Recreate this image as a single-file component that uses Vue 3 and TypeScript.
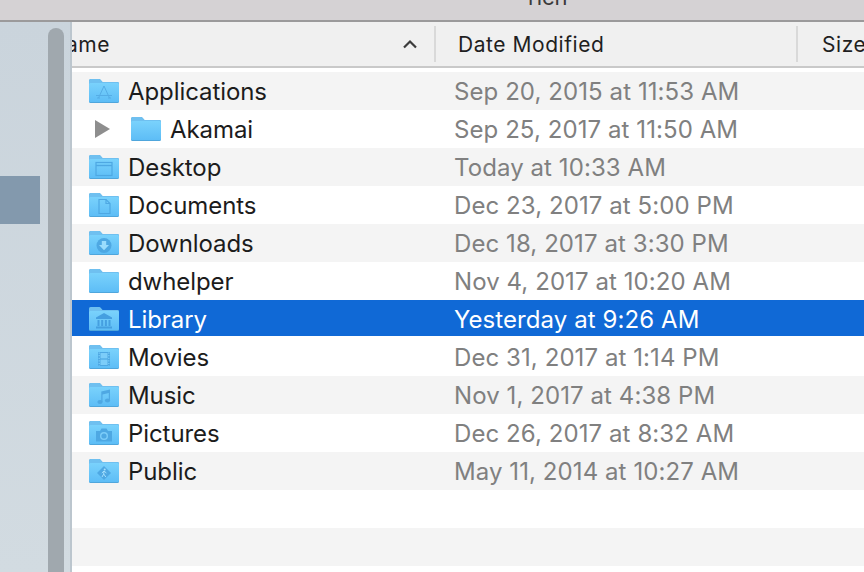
<script setup lang="ts">
interface Row {
  name: string
  date: string
  glyph: string
  expandable?: boolean
  selected?: boolean
}

const rows: Row[] = [
  { name: 'Applications', date: 'Sep 20, 2015 at 11:53 AM', glyph: 'apps' },
  { name: 'Akamai', date: 'Sep 25, 2017 at 11:50 AM', glyph: '', expandable: true },
  { name: 'Desktop', date: 'Today at 10:33 AM', glyph: 'desktop' },
  { name: 'Documents', date: 'Dec 23, 2017 at 5:00 PM', glyph: 'docs' },
  { name: 'Downloads', date: 'Dec 18, 2017 at 3:30 PM', glyph: 'down' },
  { name: 'dwhelper', date: 'Nov 4, 2017 at 10:20 AM', glyph: '' },
  { name: 'Library', date: 'Yesterday at 9:26 AM', glyph: 'library', selected: true },
  { name: 'Movies', date: 'Dec 31, 2017 at 1:14 PM', glyph: 'movies' },
  { name: 'Music', date: 'Nov 1, 2017 at 4:38 PM', glyph: 'music' },
  { name: 'Pictures', date: 'Dec 26, 2017 at 8:32 AM', glyph: 'pictures' },
  { name: 'Public', date: 'May 11, 2014 at 10:27 AM', glyph: 'public' },
]

const fillers = [0, 1, 2]
</script>

<template>
  <div class="window">
    <div class="titlebar"><span class="title">rich</span></div>
    <div class="main">
      <aside class="sidebar">
        <div class="side-selection"></div>
        <div class="thumb"></div>
      </aside>
      <section class="content">
        <header class="head">
          <div class="col col-name">
            <div class="name-clip"><span>Name</span></div>
            <svg class="sort" width="16" height="10" viewBox="0 0 16 10">
              <path d="M2 8.5 L8 2.5 L14 8.5" fill="none" stroke="#3c3c3c" stroke-width="2.2" />
            </svg>
          </div>
          <div class="col col-date">Date Modified</div>
          <div class="col col-size">Size</div>
        </header>
        <div class="list">
          <div
            v-for="(row, i) in rows"
            :key="row.name"
            class="row"
            :class="{ odd: i % 2 === 0, selected: row.selected, nested: row.expandable }"
          >
            <div class="cell-name">
              <svg v-if="row.expandable" class="disclosure" width="15" height="18" viewBox="0 0 15 18">
                <path d="M0 0 L15 9 L0 18 Z" fill="#8e8e8e" />
              </svg>
              <svg class="folder" width="30" height="24" viewBox="0 0 30 24">
                <defs>
                  <linearGradient :id="'f' + i" x1="0" y1="0" x2="0" y2="1">
                    <stop offset="0" stop-color="#7ad2fc" />
                    <stop offset="1" stop-color="#5dbdf6" />
                  </linearGradient>
                </defs>
                <path d="M0 2 a2 2 0 0 1 2-2 h8 a2 2 0 0 1 1.5 .7 l2 2.3 H28.5 a1.5 1.5 0 0 1 1.5 1.5 V22.5 a1.5 1.5 0 0 1-1.5 1.5 H1.5 A1.5 1.5 0 0 1 0 22.5 Z" fill="#4fa6dc" />
                <path d="M0 2 a2 2 0 0 1 2-2 h8 a2 2 0 0 1 1.5 .7 l2 2.3 H28.5 a1.5 1.5 0 0 1 1.5 1.5 V6 H0 Z" fill="#6fc0f0" />
                <path d="M0 5.5 a1.5 1.5 0 0 1 1.5-1.5 H28.5 a1.5 1.5 0 0 1 1.5 1.5 V22 a1 1 0 0 1-1 1 H1 a1 1 0 0 1-1-1 Z" :fill="'url(#f' + i + ')'" />
                <g v-if="row.glyph === 'apps'" fill="none" stroke="#55ade6" stroke-width="1">
                  <path d="M9.5 19 L15 7 L20.5 19 M7 16.5 H23" />
                  <path d="M8 19 H11 M19 19 H22" />
                </g>
                <g v-else-if="row.glyph === 'desktop'" fill="none" stroke="#4ea8e3" stroke-width="1.2">
                  <rect x="7" y="7.5" width="16" height="13" />
                  <path d="M7 10.5 H23" stroke-width="1.4" />
                </g>
                <g v-else-if="row.glyph === 'docs'" fill="none" stroke="#4ea8e3" stroke-width="1.2">
                  <path d="M10 6.5 H17 L21 10.5 V20.5 H10 Z" />
                  <path d="M17 6.5 V10.5 H21" />
                </g>
                <g v-else-if="row.glyph === 'down'">
                  <circle cx="15" cy="14.5" r="7.5" fill="#4ea8e3" />
                  <path d="M12.8 10 H17.2 V14 H20 L15 19.3 L10 14 H12.8 Z" fill="#9adcfd" />
                </g>
                <g v-else-if="row.glyph === 'library'" fill="#459fe0">
                  <path d="M15 6 L23 10.5 V12 H7 V10.5 Z" />
                  <rect x="8.5" y="13" width="2" height="6" />
                  <rect x="12.2" y="13" width="2" height="6" />
                  <rect x="15.9" y="13" width="2" height="6" />
                  <rect x="19.5" y="13" width="2" height="6" />
                  <rect x="7" y="19.5" width="16" height="2" />
                </g>
                <g v-else-if="row.glyph === 'movies'">
                  <rect x="9" y="7" width="12" height="14" fill="#4ea8e3" />
                  <rect x="11.5" y="8" width="7" height="5.4" fill="#7ccdf9" />
                  <rect x="11.5" y="14.6" width="7" height="5.4" fill="#7ccdf9" />
                  <path d="M10.2 7.5 V21 M19.8 7.5 V21" stroke="#7ccdf9" stroke-width="1.2" stroke-dasharray="1.2 1.4" />
                </g>
                <g v-else-if="row.glyph === 'music'" fill="#4ea8e3">
                  <ellipse cx="11" cy="19" rx="2.6" ry="2.1" />
                  <ellipse cx="18.5" cy="17.5" rx="2.6" ry="2.1" />
                  <path d="M12.3 19 V8.5 L21 6.5 V17.5 H19.8 V10 L13.5 11.4 V19 Z" />
                </g>
                <g v-else-if="row.glyph === 'pictures'">
                  <path d="M7 10 H11 L12.5 7.5 H17.5 L19 10 H23 V20.5 H7 Z" fill="#4ea8e3" />
                  <circle cx="15" cy="15" r="4" fill="#7ccdf9" />
                  <circle cx="15" cy="15" r="2.6" fill="#4ea8e3" />
                </g>
                <g v-else-if="row.glyph === 'public'">
                  <path d="M15 7 L22 14 L15 21 L8 14 Z" fill="#4ea8e3" />
                  <circle cx="15.7" cy="10.4" r="1" fill="#a5e0fd" />
                  <path d="M15 12 L12.8 14 M15 12 L17.4 14 M15 12 L14.7 15 L13 18 M14.7 15 L16.8 18" fill="none" stroke="#a5e0fd" stroke-width="1" />
                </g>
              </svg>
              <span class="label">{{ row.name }}</span>
            </div>
            <div class="cell-date">{{ row.date }}</div>
          </div>
          <div v-for="n in fillers" :key="n" class="row" :class="{ odd: n === 1 }"></div>
        </div>
      </section>
    </div>
  </div>
</template>

<style scoped>
.window {
  width: 864px;
  height: 572px;
  overflow: hidden;
  display: flex;
  flex-direction: column;
  font-family: Inter, "Liberation Sans", sans-serif;
  background: #fff;
  color: #1c1c1c;
}
.titlebar {
  height: 20px;
  flex: none;
  background: #d5d2d4;
  border-bottom: 2px solid #9b9a9b;
  box-sizing: content-box;
  overflow: hidden;
  display: flex;
  justify-content: flex-start;
  padding-left: 528px;
}
.title {
  font-size: 22px;
  line-height: 20px;
  margin-top: -13px;
  color: #3a3a3a;
}
.main {
  flex: 1;
  display: flex;
  min-height: 0;
}
.sidebar {
  width: 72px;
  flex: none;
  position: relative;
  box-sizing: border-box;
  padding-top: 154px;
  background: linear-gradient(#cad4dc, #d2dbe1);
}
.side-selection {
  width: 40px;
  height: 48px;
  background: #8399ad;
}
.thumb {
  position: absolute;
  left: 48px;
  top: 6px;
  bottom: 0;
  width: 16px;
  border-radius: 8px 8px 0 0;
  background: #a0a8ae;
}
.sidebar::after {
  content: "";
  position: absolute;
  right: 0;
  top: 0;
  bottom: 0;
  width: 2px;
  background: #bcc6ce;
}
.content {
  flex: 1;
  min-width: 0;
  overflow: hidden;
}
.head {
  height: 46px;
  box-sizing: border-box;
  display: flex;
  align-items: center;
  background: #f0f0f0;
  border-bottom: 2px solid #c9c9c9;
  font-size: 21px;
  letter-spacing: 0.55px;
  color: #1f1f1f;
}
.col {
  height: 36px;
  display: flex;
  align-items: center;
  box-sizing: border-box;
  flex: none;
}
.col-name {
  width: 362px;
  justify-content: space-between;
  padding-right: 16px;
}
.name-clip {
  width: 38px;
  overflow: hidden;
  display: flex;
  justify-content: flex-end;
}
.col-date {
  width: 362px;
  padding-left: 22px;
  border-left: 2px solid #d9d9d9;
}
.col-size {
  padding-left: 24px;
  border-left: 2px solid #d9d9d9;
}
.list {
  padding-top: 4px;
}
.row {
  height: 38px;
  display: grid;
  grid-template-columns: 382px 1fr;
  align-items: center;
  font-size: 24px;
  letter-spacing: -0.08px;
}
.row.odd {
  background: #f4f4f4;
}
.row.selected {
  height: 36px;
  box-sizing: border-box;
  padding-top: 2px;
  margin-bottom: 2px;
  background: #1069d6;
  color: #fff;
}
.cell-name {
  display: flex;
  align-items: center;
  padding-left: 17px;
}
.row.nested .cell-name {
  padding-left: 23px;
}
.disclosure {
  margin-right: 21px;
  flex: none;
}
.folder {
  flex: none;
  margin-right: 9px;
}
.cell-date {
  color: #808080;
  letter-spacing: 0.08px;
}
.row.selected .cell-date {
  color: #fff;
}
</style>

<style>
html,
body {
  margin: 0;
  background: #fff;
}
</style>
